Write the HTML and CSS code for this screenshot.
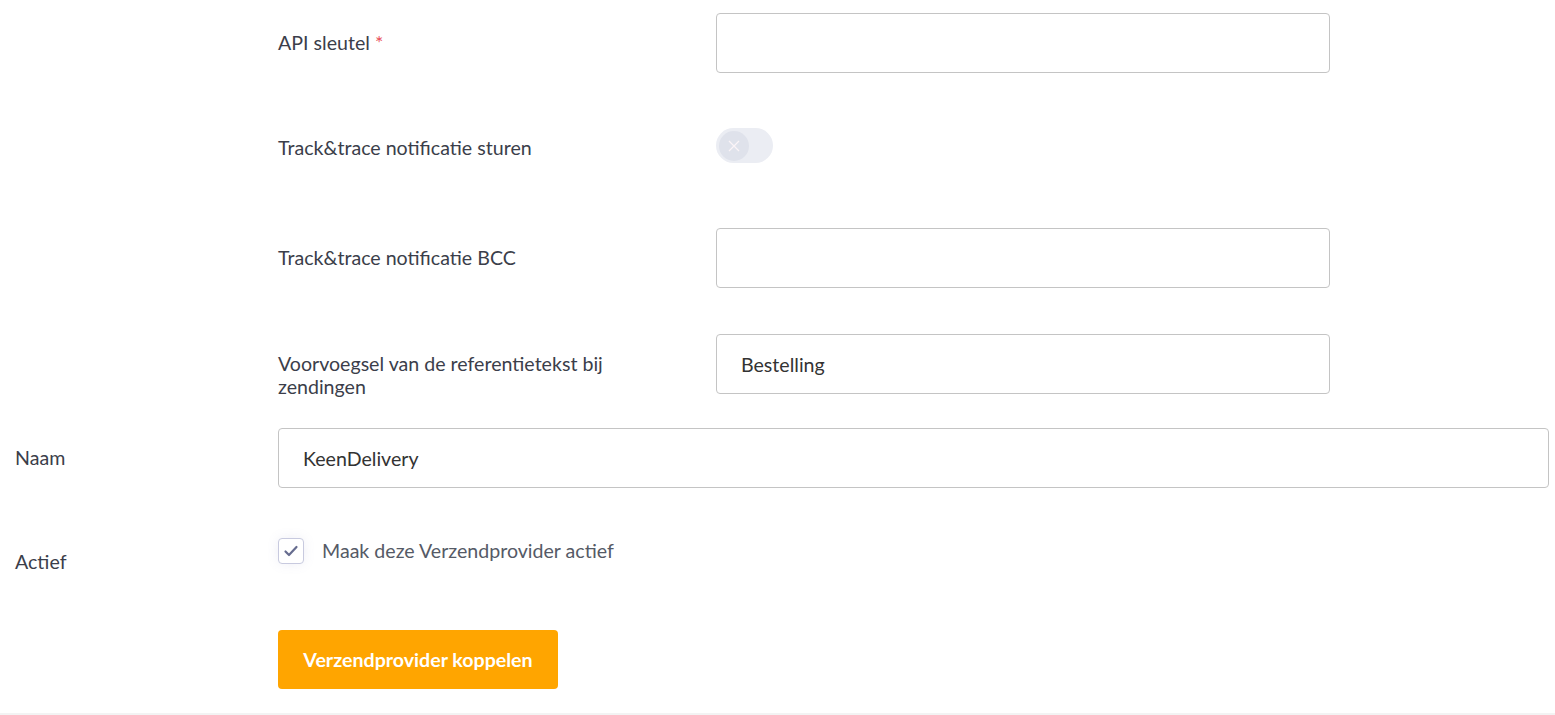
FILE: index.html
```html
<!DOCTYPE html>
<html lang="nl">
<head>
<meta charset="utf-8">
<title>Verzendprovider koppelen</title>
<link rel="stylesheet" href="styles.css">
</head>
<body>
<div class="page">
  <form class="form">
    <div class="row row-nested">
      <div class="outer-label"></div>
      <div class="nested">
        <div class="frow">
          <label class="flabel">API sleutel <span class="req">*</span></label>
          <div class="fctl"><input class="input" type="text"></div>
        </div>
        <div class="frow frow-toggle">
          <label class="flabel">Track&amp;trace notificatie sturen</label>
          <div class="fctl">
            <span class="toggle">
              <span class="knob">
                <svg width="12" height="12" viewBox="0 0 12 12"><path d="M1 1 L11 11 M11 1 L1 11" stroke="#fbf4f7" stroke-width="1.3" fill="none"/></svg>
              </span>
            </span>
          </div>
        </div>
        <div class="frow frow-bcc">
          <label class="flabel">Track&amp;trace notificatie BCC</label>
          <div class="fctl"><input class="input" type="text"></div>
        </div>
        <div class="frow">
          <label class="flabel">Voorvoegsel van de referentietekst bij zendingen</label>
          <div class="fctl"><input class="input" type="text" value="Bestelling"></div>
        </div>
      </div>
    </div>
    <div class="row row-naam">
      <label class="outer-label">Naam</label>
      <div class="octl"><input class="input" type="text" value="KeenDelivery"></div>
    </div>
    <div class="row row-actief">
      <label class="outer-label">Actief</label>
      <div class="octl">
        <label class="check">
          <span class="box">
            <svg width="16" height="16" viewBox="0 0 16 16"><path d="M2.5 8.5 L6 12 L13.5 4" stroke="#666c8f" stroke-width="2.2" fill="none" stroke-linecap="round" stroke-linejoin="round"/></svg>
          </span>
          <span class="check-text">Maak deze Verzendprovider actief</span>
        </label>
      </div>
    </div>
    <div class="row row-btn">
      <div class="outer-label"></div>
      <div class="octl"><button type="button" class="btn">Verzendprovider koppelen</button></div>
    </div>
  </form>
  <div class="footer-band"></div>
</div>
</body>
</html>
```
FILE: styles.css
```css
html, body {
  margin: 0;
  padding: 0;
  background: #ffffff;
}
body {
  font-family: Lato, "Open Sans", Arial, sans-serif;
  font-size: 19.6px;
  color: #3b3e4a;
}
.page {
  width: 1555px;
}
.form {
  padding: 13px 6px 24px 15px;
}
.row {
  display: grid;
  grid-template-columns: 263px 1fr;
}
.outer-label {
  padding-top: 18px;
  line-height: 23px;
}
.nested {
  display: flex;
  flex-direction: column;
}
.frow {
  display: grid;
  grid-template-columns: 438px 614px;
  align-items: start;
  margin-bottom: 45px;
}
.frow-bcc {
  margin-bottom: 46px;
}
.frow:last-child {
  margin-bottom: 30px;
}
.flabel {
  padding-top: 18px;
  line-height: 23px;
  padding-right: 80px;
}
.req {
  color: #e8505b;
}
.input {
  display: block;
  box-sizing: border-box;
  width: 100%;
  height: 60px;
  border: 1px solid #c4c4c4;
  border-radius: 4px;
  padding: 0 24px;
  font-family: Lato, "Open Sans", Arial, sans-serif;
  font-size: 19.6px;
  color: #333333;
  background: #ffffff;
  outline: none;
}
.frow-toggle {
  height: 65px;
}
.frow-toggle .fctl {
  padding-top: 10px;
}
.toggle {
  display: flex;
  align-items: center;
  width: 57px;
  height: 35px;
  border-radius: 18px;
  background: #ebedf3;
  box-sizing: border-box;
  padding-left: 3px;
}
.knob {
  width: 30px;
  height: 30px;
  border-radius: 50%;
  background: #dfe2eb;
  display: flex;
  align-items: center;
  justify-content: center;
}
.row-naam {
  margin-bottom: 44px;
}
.row-actief {
  margin-bottom: 57px;
}
.row-actief .octl {
  padding-top: 6px;
}
.check {
  display: flex;
  align-items: center;
  gap: 18px;
}
.box {
  width: 26px;
  height: 26px;
  box-sizing: border-box;
  border: 1px solid #c8cadf;
  border-radius: 4px;
  background: #ffffff;
  display: flex;
  align-items: center;
  justify-content: center;
  box-shadow: 0 0 12px rgba(120, 125, 180, 0.12);
}
.check-text {
  color: #555a66;
  line-height: 26px;
}
.btn {
  width: 280px;
  height: 59px;
  border: none;
  border-radius: 4px;
  background: #ffa500;
  color: #ffffff;
  font-family: Lato, "Open Sans", Arial, sans-serif;
  font-size: 19.6px;
  font-weight: 700;
  cursor: pointer;
}
.footer-band {
  height: 20px;
  background: #f3f3f3;
}
```
